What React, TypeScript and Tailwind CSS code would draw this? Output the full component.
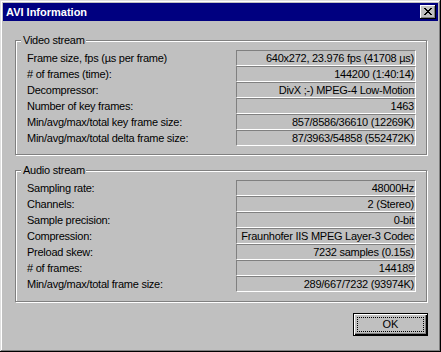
const font = { fontFamily: '"Liberation Sans", Arial, sans-serif' };

const video: [string, string][] = [
  ["Frame size, fps (µs per frame)", "640x272, 23.976 fps (41708 µs)"],
  ["# of frames (time):", "144200 (1:40:14)"],
  ["Decompressor:", "DivX ;-) MPEG-4 Low-Motion"],
  ["Number of key frames:", "1463"],
  ["Min/avg/max/total key frame size:", "857/8586/36610 (12269K)"],
  ["Min/avg/max/total delta frame size:", "87/3963/54858 (552472K)"],
];

const audio: [string, string][] = [
  ["Sampling rate:", "48000Hz"],
  ["Channels:", "2 (Stereo)"],
  ["Sample precision:", "0-bit"],
  ["Compression:", "Fraunhofer IIS MPEG Layer-3 Codec"],
  ["Preload skew:", "7232 samples (0.15s)"],
  ["# of frames:", "144189"],
  ["Min/avg/max/total frame size:", "289/667/7232 (93974K)"],
];

function Group({ title, rows, pb }: { title: string; rows: [string, string][]; pb: string }) {
  return (
    <div
      className={`relative w-[412px] border border-[#808080] shadow-[inset_1px_1px_0_#fff,1px_1px_0_#fff] pt-[9px] pl-[11px] pr-[10px] ${pb}`}
    >
      <div className="absolute left-[5px] top-[-8px] bg-[#c0c0c0] pl-[2px] pr-[1px] text-[11px] leading-[14px] tracking-[-0.25px]">
        {title}
      </div>
      {rows.map(([label, value], i) => (
        <div key={i} className="flex h-[16px] items-center">
          <div className="flex-1 whitespace-nowrap text-[11px] leading-[14px] tracking-[-0.25px]">{label}</div>
          <div className="flex h-[16px] w-[180px] items-center justify-end overflow-hidden whitespace-nowrap border-t border-l border-b border-r border-t-[#808080] border-l-[#808080] border-b-white border-r-white pr-[1px] text-[11px] leading-[14px] tracking-[-0.25px]">
            {value}
          </div>
        </div>
      ))}
    </div>
  );
}

export default function App() {
  return (
    <div
      style={font}
      className="relative h-[352px] w-[441px] bg-[#c0c0c0] p-[3px] text-black shadow-[inset_-1px_-1px_0_#000,inset_1px_1px_0_#dfdfdf,inset_-2px_-2px_0_#808080,inset_2px_2px_0_#fff]"
    >
      <div className="flex h-[18px] items-center justify-between bg-[#000080] pl-[3px] pr-[2px]">
        <span className="text-[11px] font-bold leading-[14px] text-white">AVI Information</span>
        <div className="flex h-[14px] w-[16px] items-center justify-center bg-[#c0c0c0] shadow-[inset_-1px_-1px_0_#000,inset_1px_1px_0_#fff,inset_-2px_-2px_0_#808080]">
          <svg width="8" height="7" viewBox="0 0 8 7" className="mb-[1px]">
            <path d="M0 0h2v1h1v1h2v-1h1v-1h2v1h-1v1h-1v1h-1v1h1v1h1v1h1v1h-2v-1h-1v-1h-2v1h-1v1h-2v-1h1v-1h1v-1h1v-1h-1v-1h-1v-1h-1z" fill="#000" />
          </svg>
        </div>
      </div>

      <div className="pl-[12px] pt-[19px]">
        <Group title="Video stream" rows={video} pb="pb-[8px]" />
        <div className="mt-[15px]">
          <Group title="Audio stream" rows={audio} pb="pb-[9px]" />
        </div>
        <div className="mt-[11px] flex w-[413px] justify-end">
          <button className="flex h-[23px] w-[75px] items-center justify-center border border-black bg-[#c0c0c0] shadow-[inset_1px_1px_0_#fff,inset_-1px_-1px_0_#000,inset_-2px_-2px_0_#808080]">
            <span className="flex h-[15px] w-[67px] items-center justify-center border border-dotted border-black text-[11px] leading-[13px]">
              OK
            </span>
          </button>
        </div>
      </div>
    </div>
  );
}
